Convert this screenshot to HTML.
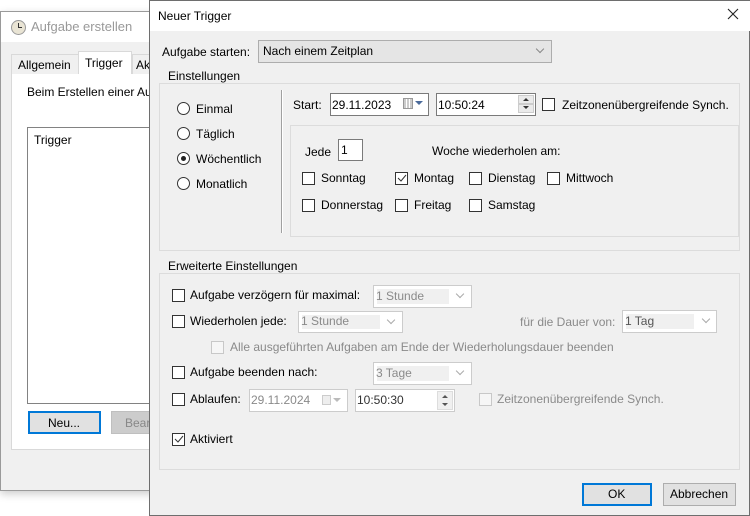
<!DOCTYPE html>
<html><head><meta charset="utf-8"><style>
*{box-sizing:border-box;margin:0;padding:0}
body{width:750px;height:516px;position:relative;overflow:hidden;background:#fff;font-family:"Liberation Sans",sans-serif;font-size:12px;color:#000}
.a{position:absolute}
.t{position:absolute;white-space:nowrap;line-height:14px}
.g{color:#8a8a8a}
.cb{position:absolute;width:13px;height:13px;border:1px solid #333;background:#fff}
.cbd{border-color:#c8c8c8;background:#f6f6f6}
.rb{position:absolute;width:13px;height:13px;border:1px solid #333;border-radius:50%;background:#fff}
.box{position:absolute;background:#fff;border:1px solid #7a7a7a}
.dbox{position:absolute;background:#fff;border:1px solid #ccc}
.grp{position:absolute;border:1px solid #dcdcdc}
.lbl{position:absolute;background:#f0f0f0;padding:0 3px;line-height:14px}
.chev{position:absolute;width:6px;height:6px;border-right:1px solid #888;border-bottom:1px solid #888;transform:rotate(45deg)}
.dcombo{position:absolute;background:#fff;border:1px solid #ccc}
.dcombo .in{position:absolute;left:3px;top:3px;bottom:3px;right:22px;background:#f0f0f0}
</style></head><body>
<!-- background window -->
<div class="a" style="left:0;top:11px;width:160px;height:480px;background:#f0f0f0;border:1px solid #9a9a9a;box-shadow:0 3px 8px rgba(0,0,0,.2)"></div>
<div class="a" style="left:1px;top:12px;width:158px;height:30px;background:#fff"></div>
<div class="a" style="left:11px;top:20px;width:15px;height:15px;border-radius:50%;background:#e9e4d4;border:1px solid #999"></div>
<div class="a" style="left:18px;top:23px;width:1px;height:5px;background:#333"></div>
<div class="a" style="left:18px;top:27px;width:4px;height:1px;background:#333"></div>
<div class="t" style="left:31px;top:20px;font-size:13px;color:#999">Aufgabe erstellen</div>
<div class="a" style="left:11px;top:73px;width:150px;height:377px;background:#fff;border:1px solid #d9d9d9"></div>
<div class="a" style="left:11px;top:54px;width:68px;height:20px;background:#f0f0f0;border:1px solid #d9d9d9;border-bottom:none"></div>
<div class="t" style="left:18px;top:58px">Allgemein</div>
<div class="a" style="left:78px;top:51px;width:54px;height:23px;background:#fff;border:1px solid #d9d9d9;border-bottom:none"></div>
<div class="t" style="left:85px;top:56px">Trigger</div>
<div class="a" style="left:132px;top:54px;width:30px;height:20px;background:#f0f0f0;border:1px solid #d9d9d9;border-bottom:none"></div>
<div class="t" style="left:136px;top:58px">Ak</div>
<div class="t" style="left:27px;top:85px">Beim Erstellen einer Auf</div>
<div class="a" style="left:27px;top:127px;width:130px;height:277px;background:#fff;border:1px solid #828282"></div>
<div class="t" style="left:34px;top:133px">Trigger</div>
<div class="a" style="left:28px;top:411px;width:73px;height:23px;background:#e1e1e1;border:2px solid #0078d7"></div>
<div class="t" style="left:48px;top:416px">Neu...</div>
<div class="a" style="left:111px;top:411px;width:45px;height:23px;background:#ccc;border:1px solid #bfbfbf"></div>
<div class="t" style="left:125px;top:416px;color:#888">Bearb</div>

<!-- dialog -->
<div class="a" style="left:149px;top:0;width:601px;height:516px;background:#f0f0f0;border:1px solid #6e6e6e"></div>
<div class="a" style="left:150px;top:1px;width:600px;height:30px;background:#fff"></div>
<div class="t" style="left:158px;top:9px">Neuer Trigger</div>
<svg class="a" style="left:727px;top:8px" width="12" height="12"><path d="M1 1L11 11M11 1L1 11" stroke="#222" stroke-width="1.1"/></svg>

<div class="t" style="left:162px;top:45px">Aufgabe starten:</div>
<div class="a" style="left:258px;top:40px;width:294px;height:23px;background:#e5e5e5;border:1px solid #adadad"></div>
<div class="t" style="left:263px;top:44px">Nach einem Zeitplan</div>
<div class="chev" style="left:537px;top:46px"></div>

<div class="grp" style="left:159px;top:83px;width:581px;height:168px"></div>
<div class="lbl" style="left:165px;top:69px">Einstellungen</div>
<div class="rb" style="left:177px;top:102px"></div><div class="t" style="left:196px;top:102px">Einmal</div>
<div class="rb" style="left:177px;top:127px"></div><div class="t" style="left:196px;top:127px">Täglich</div>
<div class="rb" style="left:177px;top:152px"></div><div class="a" style="left:181px;top:156px;width:5px;height:5px;border-radius:50%;background:#222"></div><div class="t" style="left:196px;top:152px">Wöchentlich</div>
<div class="rb" style="left:177px;top:177px"></div><div class="t" style="left:196px;top:177px">Monatlich</div>
<div class="a" style="left:281px;top:90px;width:2px;height:143px;border-left:1px solid #a0a0a0;border-right:1px solid #fff"></div>

<div class="t" style="left:293px;top:98px">Start:</div>
<div class="box" style="left:330px;top:93px;width:99px;height:23px"></div>
<div class="t" style="left:332px;top:98px">29.11.2023</div>
<div class="a" style="left:403px;top:98px;width:10px;height:11px;border:1px solid #999;background:repeating-linear-gradient(90deg,#ccc 0 2px,#fff 2px 3px)"></div>
<svg class="a" style="left:415px;top:101px" width="8" height="5"><path d="M0 0H8L4 4Z" fill="#4a6a9a"/></svg>
<div class="box" style="left:436px;top:93px;width:100px;height:23px"></div>
<div class="t" style="left:438px;top:98px">10:50:24</div>
<div class="a" style="left:518px;top:95px;width:16px;height:9px;background:#eaeaea;border:1px solid #ccc"></div>
<div class="a" style="left:518px;top:104px;width:16px;height:9px;background:#eaeaea;border:1px solid #ccc"></div>
<svg class="a" style="left:522px;top:97px" width="8" height="14"><path d="M4 1L7 4H1Z M1 9H7L4 12Z" fill="#333"/></svg>
<div class="cb" style="left:542px;top:98px"></div><div class="t" style="left:562px;top:98px">Zeitzonenübergreifende Synch.</div>

<div class="a" style="left:290px;top:125px;width:449px;height:112px;border:1px solid #dcdcdc"></div>
<div class="t" style="left:305px;top:145px">Jede</div>
<div class="box" style="left:338px;top:139px;width:25px;height:22px"></div>
<div class="t" style="left:341px;top:143px">1</div>
<div class="t" style="left:432px;top:144px">Woche wiederholen am:</div>
<div class="cb" style="left:302px;top:172px"></div><div class="t" style="left:321px;top:171px">Sonntag</div>
<div class="cb" style="left:395px;top:172px"></div><svg class="a" style="left:397px;top:174px" width="10" height="9"><path d="M1 4L4 7L9 1" stroke="#333" fill="none" stroke-width="1"/></svg><div class="t" style="left:414px;top:171px">Montag</div>
<div class="cb" style="left:469px;top:172px"></div><div class="t" style="left:488px;top:171px">Dienstag</div>
<div class="cb" style="left:547px;top:172px"></div><div class="t" style="left:566px;top:171px">Mittwoch</div>
<div class="cb" style="left:302px;top:199px"></div><div class="t" style="left:321px;top:198px">Donnerstag</div>
<div class="cb" style="left:395px;top:199px"></div><div class="t" style="left:414px;top:198px">Freitag</div>
<div class="cb" style="left:469px;top:199px"></div><div class="t" style="left:488px;top:198px">Samstag</div>

<div class="grp" style="left:159px;top:273px;width:581px;height:197px"></div>
<div class="lbl" style="left:165px;top:259px">Erweiterte Einstellungen</div>
<div class="cb" style="left:172px;top:289px"></div><div class="t" style="left:190px;top:288px">Aufgabe verzögern für maximal:</div>
<div class="dcombo" style="left:373px;top:285px;width:99px;height:23px"><div class="in"></div></div>
<div class="t g" style="left:376px;top:289px">1 Stunde</div><div class="chev" style="left:457px;top:291px;border-color:#aaa"></div>
<div class="cb" style="left:172px;top:315px"></div><div class="t" style="left:190px;top:314px">Wiederholen jede:</div>
<div class="dcombo" style="left:298px;top:311px;width:105px;height:22px"><div class="in"></div></div>
<div class="t g" style="left:301px;top:314px">1 Stunde</div><div class="chev" style="left:388px;top:317px;border-color:#aaa"></div>
<div class="t g" style="left:520px;top:315px">für die Dauer von:</div>
<div class="dcombo" style="left:622px;top:310px;width:95px;height:23px"><div class="in"></div></div>
<div class="t" style="left:625px;top:314px;color:#555">1 Tag</div><div class="chev" style="left:703px;top:316px;border-color:#aaa"></div>
<div class="cb cbd" style="left:211px;top:341px"></div><div class="t g" style="left:230px;top:340px">Alle ausgeführten Aufgaben am Ende der Wiederholungsdauer beenden</div>
<div class="cb" style="left:172px;top:366px"></div><div class="t" style="left:190px;top:365px">Aufgabe beenden nach:</div>
<div class="dcombo" style="left:373px;top:362px;width:99px;height:23px"><div class="in"></div></div>
<div class="t g" style="left:376px;top:366px">3 Tage</div><div class="chev" style="left:457px;top:368px;border-color:#aaa"></div>
<div class="cb" style="left:172px;top:393px"></div><div class="t" style="left:190px;top:392px">Ablaufen:</div>
<div class="dbox" style="left:249px;top:389px;width:99px;height:23px"></div>
<div class="t g" style="left:251px;top:393px">29.11.2024</div>
<div class="a" style="left:322px;top:395px;width:9px;height:10px;border:1px solid #ccc;background:#eee"></div>
<svg class="a" style="left:333px;top:398px" width="8" height="5"><path d="M0 0H8L4 4Z" fill="#bbb"/></svg>
<div class="dbox" style="left:355px;top:389px;width:100px;height:23px"></div>
<div class="t" style="left:357px;top:393px;color:#333">10:50:30</div>
<div class="a" style="left:437px;top:391px;width:16px;height:19px;background:#f0f0f0;border:1px solid #ddd"></div>
<svg class="a" style="left:441px;top:394px" width="8" height="14"><path d="M4 1L7 4H1Z M1 9H7L4 12Z" fill="#555"/></svg>
<div class="cb cbd" style="left:479px;top:393px"></div><div class="t g" style="left:497px;top:392px">Zeitzonenübergreifende Synch.</div>
<div class="cb" style="left:172px;top:433px"></div><svg class="a" style="left:174px;top:435px" width="10" height="9"><path d="M1 4L4 7L9 1" stroke="#333" fill="none" stroke-width="1"/></svg><div class="t" style="left:190px;top:432px">Aktiviert</div>

<div class="a" style="left:582px;top:483px;width:70px;height:23px;background:#e1e1e1;border:2px solid #0078d7"></div>
<div class="t" style="left:608px;top:487px">OK</div>
<div class="a" style="left:663px;top:483px;width:73px;height:23px;background:#e1e1e1;border:1px solid #adadad"></div>
<div class="t" style="left:670px;top:487px">Abbrechen</div>
</body></html>
